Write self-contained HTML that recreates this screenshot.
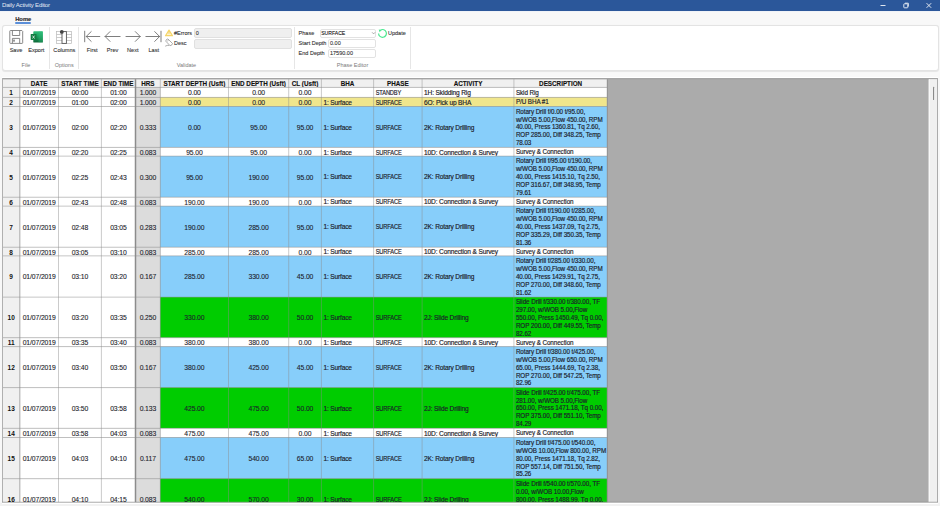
<!DOCTYPE html>
<html><head><meta charset="utf-8"><style>
html,body{margin:0;padding:0;width:940px;height:506px;overflow:hidden;background:#f8f8f8;font-family:"Liberation Sans",sans-serif;color:#1c1c2a}
.t,.c{position:absolute}
.t{white-space:nowrap}
#grid{position:absolute;left:0;top:0;width:940px;height:501.8px;overflow:hidden}
.c{box-sizing:border-box;display:flex;align-items:center;overflow:hidden}
.hc{position:relative;top:0px;font-weight:bold;-webkit-text-stroke:0.12px #111;font-size:6.3px;width:100%;text-align:center;white-space:nowrap;color:#111}
.rn{position:relative;top:0.5px;font-weight:bold;font-size:6.5px;width:100%;text-align:center;color:#111}
.cc{position:relative;top:0.5px;font-size:6.8px;letter-spacing:-0.1px;-webkit-text-stroke:0.1px #1c1c2a;width:100%;text-align:center;white-space:nowrap}
.lc{position:relative;top:0.5px;font-size:6.3px;letter-spacing:-0.08px;-webkit-text-stroke:0.16px #1c1c2a;line-height:7.9px;padding-left:2px;white-space:nowrap}
.ph{display:inline-block;transform:scaleX(0.86);transform-origin:0 50%}
.lc2{font-size:6.6px;letter-spacing:-0.16px;top:0.8px}
</style></head><body>
<div class="t" style="left:0.00px;top:0.00px;width:940.00px;height:11.00px;box-sizing:border-box;background:#2b579a"></div>
<div class="t" style="left:0.00px;top:11.00px;width:940.00px;height:0.80px;box-sizing:border-box;background:#f0f3f8"></div>
<div class="t" style="left:2.00px;top:2.47px;font-size:6.0px;line-height:6.0px;font-weight:normal;color:#e6ecf5;letter-spacing:-0.15px">Daily Activity Editor</div>
<svg class="t" style="left:0;top:0" width="940" height="12"><g stroke="#dfe6f0" stroke-width="1" fill="none"><line x1="880.5" y1="5.5" x2="885.5" y2="5.5"/><rect x="903.8" y="3.8" width="4" height="4" rx="0.6"/><path d="M905 3.2 h3.3 v3.3"/><line x1="926.6" y1="3.2" x2="931.2" y2="7.8"/><line x1="931.2" y1="3.2" x2="926.6" y2="7.8"/></g></svg>
<div class="t" style="left:15.20px;top:16.77px;font-size:5.8px;line-height:5.8px;font-weight:bold;color:#222;-webkit-text-stroke:0.1px #222;">Home</div>
<div class="t" style="left:15.00px;top:22.30px;width:16.00px;height:2.10px;box-sizing:border-box;background:#5b8fd9;border-radius:1px"></div>
<div class="t" style="left:2.30px;top:25.20px;width:936.50px;height:46.00px;box-sizing:border-box;background:#fff;border:1px solid #e3e3e3;border-radius:3px;box-shadow:0 0.6px 0.8px rgba(0,0,0,0.08)"></div>
<div class="t" style="left:48.80px;top:27.00px;width:1.00px;height:41.50px;box-sizing:border-box;background:#e6e6e6"></div>
<div class="t" style="left:77.90px;top:27.00px;width:1.00px;height:41.50px;box-sizing:border-box;background:#e6e6e6"></div>
<div class="t" style="left:294.00px;top:27.00px;width:1.00px;height:41.50px;box-sizing:border-box;background:#e6e6e6"></div>
<div class="t" style="left:409.90px;top:27.00px;width:1.00px;height:41.50px;box-sizing:border-box;background:#e6e6e6"></div>
<div class="t" style="left:-34.00px;top:63.01px;width:120px;text-align:center;font-size:5.5px;line-height:5.5px;font-weight:normal;color:#7a7a7a;">File</div>
<div class="t" style="left:4.20px;top:63.01px;width:120px;text-align:center;font-size:5.5px;line-height:5.5px;font-weight:normal;color:#7a7a7a;">Options</div>
<div class="t" style="left:126.40px;top:63.01px;width:120px;text-align:center;font-size:5.5px;line-height:5.5px;font-weight:normal;color:#7a7a7a;">Validate</div>
<div class="t" style="left:292.50px;top:62.81px;width:120px;text-align:center;font-size:5.5px;line-height:5.5px;font-weight:normal;color:#7a7a7a;">Phase Editor</div>
<div class="t" style="left:-44.00px;top:47.76px;width:120px;text-align:center;font-size:5.6px;line-height:5.6px;font-weight:normal;color:#333;-webkit-text-stroke:0.1px #333;">Save</div>
<div class="t" style="left:-23.70px;top:47.76px;width:120px;text-align:center;font-size:5.6px;line-height:5.6px;font-weight:normal;color:#333;-webkit-text-stroke:0.1px #333;">Export</div>
<div class="t" style="left:4.40px;top:47.76px;width:120px;text-align:center;font-size:5.6px;line-height:5.6px;font-weight:normal;color:#333;-webkit-text-stroke:0.1px #333;">Columns</div>
<div class="t" style="left:32.20px;top:47.76px;width:120px;text-align:center;font-size:5.6px;line-height:5.6px;font-weight:normal;color:#333;-webkit-text-stroke:0.1px #333;">First</div>
<div class="t" style="left:52.60px;top:47.76px;width:120px;text-align:center;font-size:5.6px;line-height:5.6px;font-weight:normal;color:#333;-webkit-text-stroke:0.1px #333;">Prev</div>
<div class="t" style="left:72.80px;top:47.76px;width:120px;text-align:center;font-size:5.6px;line-height:5.6px;font-weight:normal;color:#333;-webkit-text-stroke:0.1px #333;">Next</div>
<div class="t" style="left:93.80px;top:47.76px;width:120px;text-align:center;font-size:5.6px;line-height:5.6px;font-weight:normal;color:#333;-webkit-text-stroke:0.1px #333;">Last</div>
<div class="t" style="left:194.20px;top:27.70px;width:97.50px;height:9.90px;box-sizing:border-box;background:#efefef;border:1px solid #e0e0e0;border-radius:2px"></div>
<div class="t" style="left:194.20px;top:38.80px;width:97.50px;height:10.00px;box-sizing:border-box;background:#efefef;border:1px solid #e0e0e0;border-radius:2px"></div>
<div class="t" style="left:319.50px;top:28.60px;width:56.90px;height:9.20px;box-sizing:border-box;background:#fff;border:1px solid #e2e2e2;border-radius:2px"></div>
<div class="t" style="left:328.30px;top:39.00px;width:48.10px;height:8.80px;box-sizing:border-box;background:#fff;border:1px solid #e2e2e2;border-radius:2px"></div>
<div class="t" style="left:328.30px;top:49.00px;width:48.10px;height:9.10px;box-sizing:border-box;background:#fff;border:1px solid #e2e2e2;border-radius:2px"></div>
<svg class="t" style="left:0;top:0" width="420" height="72"><g fill="none" stroke="#7a7a7a" stroke-width="0.9"><path d="M9.8 31.2 q0-0.7 0.7-0.7 h11.4 l0.8 0.8 v11.4 q0 0.7-0.7 0.7 h-11.5 q-0.7 0-0.7-0.7 z"/><path d="M12.4 30.5 v5 h7.3 v-5"/><path d="M12.4 43.4 v-5 h7.3 v5"/><rect x="13.3" y="40" width="1.4" height="1.2" stroke-width="0.6"/></g><defs><linearGradient id="xg" x1="0" y1="0" x2="0" y2="1"><stop offset="0" stop-color="#2fbd78"/><stop offset="0.5" stop-color="#1a9a5a"/><stop offset="1" stop-color="#0e6636"/></linearGradient></defs><rect x="33.3" y="31.3" width="9.6" height="11.3" rx="0.7" fill="url(#xg)"/><rect x="38.5" y="31.3" width="4.4" height="11.3" rx="0.5" fill="#33c481" opacity="0.35"/><rect x="30.7" y="33.9" width="5.8" height="6.1" rx="0.4" fill="#107c41"/><path d="M32.5 35.6 l2.1 3 M34.6 35.6 l-2.1 3" stroke="#fff" stroke-width="0.7"/><g stroke="#b8b8b8" stroke-width="0.7" fill="none"><rect x="56.6" y="31.4" width="15" height="12"/><path d="M56.6 34.5 h15 M56.6 37.5 h15 M56.6 40.5 h15"/></g><rect x="62" y="31.6" width="4.4" height="11.8" fill="#fff" stroke="#555" stroke-width="0.9"/><circle cx="61.8" cy="31.9" r="1.9" fill="#444"/><g stroke="#777" stroke-width="0.95" fill="none" stroke-linecap="round"><path d="M84.7 31.2 v10.6"/><path d="M99.8 36.5 h-13.6 M91.2 31.6 l-5 4.9 l5 4.9"/><path d="M120.1 36.5 h-15 M110 31.6 l-4.9 4.9 l4.9 4.9"/><path d="M126 36.5 h14.2 M135.3 31.6 l4.9 4.9 l-4.9 4.9"/><path d="M145.9 36.5 h13.7 M154.7 31.6 l4.9 4.9 l-4.9 4.9"/><path d="M161 31.2 v10.6"/></g><path d="M169 30.1 L172.5 35.7 H165.5 Z" fill="#fdf3cf" stroke="#f5d567" stroke-width="1.2" stroke-linejoin="round"/><path d="M169 32 v1.9" stroke="#e8c050" stroke-width="0.7"/><g fill="none" stroke="#8a8a8a" stroke-width="0.7"><path d="M166.5 39.5 l1.4-0.6 l4.6 4.6 l-0.8 1.6 l-1.6 0.6 l-4.4-4.6 z"/><path d="M167.3 41.2 l1.4-1.2"/><path d="M165.2 46.2 q2-1.2 4.2-0.8"/></g><g transform="translate(0,0.5)"><path d="M380.6 29.5 A3.9 3.9 0 1 1 378.6 32.9" fill="none" stroke="#4be890" stroke-width="1.2"/><path d="M378.7 29.0 l2.9 0.4 l-2.0 2.3 z" fill="#4be890"/></g><path d="M372.1 32.3 l1.5 1.6 l1.5-1.6" fill="none" stroke="#888" stroke-width="0.7"/></svg>
<div class="t" style="left:174.00px;top:30.91px;font-size:5.5px;line-height:5.5px;font-weight:normal;color:#333;-webkit-text-stroke:0.1px #333;">#Errors</div>
<div class="t" style="left:174.00px;top:41.31px;font-size:5.5px;line-height:5.5px;font-weight:normal;color:#333;-webkit-text-stroke:0.1px #333;">Desc</div>
<div class="t" style="left:195.80px;top:30.61px;font-size:5.5px;line-height:5.5px;font-weight:normal;color:#333;-webkit-text-stroke:0.1px #333;">0</div>
<div class="t" style="left:298.60px;top:31.21px;font-size:5.5px;line-height:5.5px;font-weight:normal;color:#333;-webkit-text-stroke:0.1px #333;">Phase</div>
<div class="t" style="left:321.20px;top:31.21px;font-size:5.1px;line-height:5.1px;font-weight:normal;color:#111;-webkit-text-stroke:0.1px #111;">SURFACE</div>
<div class="t" style="left:388.00px;top:31.01px;font-size:5.5px;line-height:5.5px;font-weight:normal;color:#333;-webkit-text-stroke:0.1px #333;">Update</div>
<div class="t" style="left:298.60px;top:41.31px;font-size:5.5px;line-height:5.5px;font-weight:normal;color:#333;-webkit-text-stroke:0.1px #333;">Start Depth</div>
<div class="t" style="left:330.00px;top:41.11px;font-size:5.5px;line-height:5.5px;font-weight:normal;color:#333;-webkit-text-stroke:0.1px #333;">0.00</div>
<div class="t" style="left:298.60px;top:51.41px;font-size:5.5px;line-height:5.5px;font-weight:normal;color:#333;-webkit-text-stroke:0.1px #333;">End Depth</div>
<div class="t" style="left:330.00px;top:51.21px;font-size:5.5px;line-height:5.5px;font-weight:normal;color:#333;-webkit-text-stroke:0.1px #333;">17590.00</div>
<svg class="t" style="left:0;top:0" width="940" height="506"><rect x="2" y="78" width="926.8" height="424.3" fill="#ababab"/><rect x="2.5" y="78.7" width="604.9" height="8.700000000000003" fill="#f0f0f0"/><rect x="2.5" y="87.4" width="17.30" height="10.00" fill="#f0f0f0"/><rect x="19.8" y="87.4" width="115.70" height="10.00" fill="#ffffff"/><rect x="135.5" y="87.4" width="24.80" height="10.00" fill="#dcdcdc"/><rect x="160.3" y="87.4" width="447.10" height="10.00" fill="#ffffff"/><rect x="2.5" y="97.4" width="17.30" height="9.10" fill="#f0f0f0"/><rect x="19.8" y="97.4" width="115.70" height="9.10" fill="#ffffff"/><rect x="135.5" y="97.4" width="24.80" height="9.10" fill="#dcdcdc"/><rect x="160.3" y="97.4" width="447.10" height="9.10" fill="#f0e68c"/><rect x="2.5" y="106.5" width="17.30" height="40.90" fill="#f0f0f0"/><rect x="19.8" y="106.5" width="115.70" height="40.90" fill="#ffffff"/><rect x="135.5" y="106.5" width="24.80" height="40.90" fill="#dcdcdc"/><rect x="160.3" y="106.5" width="447.10" height="40.90" fill="#87cefa"/><rect x="2.5" y="147.4" width="17.30" height="8.70" fill="#f0f0f0"/><rect x="19.8" y="147.4" width="115.70" height="8.70" fill="#ffffff"/><rect x="135.5" y="147.4" width="24.80" height="8.70" fill="#dcdcdc"/><rect x="160.3" y="147.4" width="447.10" height="8.70" fill="#ffffff"/><rect x="2.5" y="156.1" width="17.30" height="41.10" fill="#f0f0f0"/><rect x="19.8" y="156.1" width="115.70" height="41.10" fill="#ffffff"/><rect x="135.5" y="156.1" width="24.80" height="41.10" fill="#dcdcdc"/><rect x="160.3" y="156.1" width="447.10" height="41.10" fill="#87cefa"/><rect x="2.5" y="197.2" width="17.30" height="8.90" fill="#f0f0f0"/><rect x="19.8" y="197.2" width="115.70" height="8.90" fill="#ffffff"/><rect x="135.5" y="197.2" width="24.80" height="8.90" fill="#dcdcdc"/><rect x="160.3" y="197.2" width="447.10" height="8.90" fill="#ffffff"/><rect x="2.5" y="206.1" width="17.30" height="41.10" fill="#f0f0f0"/><rect x="19.8" y="206.1" width="115.70" height="41.10" fill="#ffffff"/><rect x="135.5" y="206.1" width="24.80" height="41.10" fill="#dcdcdc"/><rect x="160.3" y="206.1" width="447.10" height="41.10" fill="#87cefa"/><rect x="2.5" y="247.2" width="17.30" height="8.70" fill="#f0f0f0"/><rect x="19.8" y="247.2" width="115.70" height="8.70" fill="#ffffff"/><rect x="135.5" y="247.2" width="24.80" height="8.70" fill="#dcdcdc"/><rect x="160.3" y="247.2" width="447.10" height="8.70" fill="#ffffff"/><rect x="2.5" y="255.9" width="17.30" height="41.20" fill="#f0f0f0"/><rect x="19.8" y="255.9" width="115.70" height="41.20" fill="#ffffff"/><rect x="135.5" y="255.9" width="24.80" height="41.20" fill="#dcdcdc"/><rect x="160.3" y="255.9" width="447.10" height="41.20" fill="#87cefa"/><rect x="2.5" y="297.1" width="17.30" height="40.60" fill="#f0f0f0"/><rect x="19.8" y="297.1" width="115.70" height="40.60" fill="#ffffff"/><rect x="135.5" y="297.1" width="24.80" height="40.60" fill="#dcdcdc"/><rect x="160.3" y="297.1" width="447.10" height="40.60" fill="#00cc00"/><rect x="2.5" y="337.7" width="17.30" height="8.90" fill="#f0f0f0"/><rect x="19.8" y="337.7" width="115.70" height="8.90" fill="#ffffff"/><rect x="135.5" y="337.7" width="24.80" height="8.90" fill="#dcdcdc"/><rect x="160.3" y="337.7" width="447.10" height="8.90" fill="#ffffff"/><rect x="2.5" y="346.6" width="17.30" height="41.00" fill="#f0f0f0"/><rect x="19.8" y="346.6" width="115.70" height="41.00" fill="#ffffff"/><rect x="135.5" y="346.6" width="24.80" height="41.00" fill="#dcdcdc"/><rect x="160.3" y="346.6" width="447.10" height="41.00" fill="#87cefa"/><rect x="2.5" y="387.6" width="17.30" height="40.70" fill="#f0f0f0"/><rect x="19.8" y="387.6" width="115.70" height="40.70" fill="#ffffff"/><rect x="135.5" y="387.6" width="24.80" height="40.70" fill="#dcdcdc"/><rect x="160.3" y="387.6" width="447.10" height="40.70" fill="#00cc00"/><rect x="2.5" y="428.3" width="17.30" height="9.20" fill="#f0f0f0"/><rect x="19.8" y="428.3" width="115.70" height="9.20" fill="#ffffff"/><rect x="135.5" y="428.3" width="24.80" height="9.20" fill="#dcdcdc"/><rect x="160.3" y="428.3" width="447.10" height="9.20" fill="#ffffff"/><rect x="2.5" y="437.5" width="17.30" height="41.20" fill="#f0f0f0"/><rect x="19.8" y="437.5" width="115.70" height="41.20" fill="#ffffff"/><rect x="135.5" y="437.5" width="24.80" height="41.20" fill="#dcdcdc"/><rect x="160.3" y="437.5" width="447.10" height="41.20" fill="#87cefa"/><rect x="2.5" y="478.7" width="17.30" height="41.30" fill="#f0f0f0"/><rect x="19.8" y="478.7" width="115.70" height="41.30" fill="#ffffff"/><rect x="135.5" y="478.7" width="24.80" height="41.30" fill="#dcdcdc"/><rect x="160.3" y="478.7" width="447.10" height="41.30" fill="#00cc00"/><rect x="2.5" y="86.90" width="604.90" height="1" fill="rgba(140,140,140,0.45)"/><rect x="2.5" y="96.90" width="604.90" height="1" fill="rgba(140,140,140,0.45)"/><rect x="2.5" y="106.00" width="604.90" height="1" fill="rgba(140,140,140,0.45)"/><rect x="2.5" y="146.90" width="604.90" height="1" fill="rgba(140,140,140,0.45)"/><rect x="2.5" y="155.60" width="604.90" height="1" fill="rgba(140,140,140,0.45)"/><rect x="2.5" y="196.70" width="604.90" height="1" fill="rgba(140,140,140,0.45)"/><rect x="2.5" y="205.60" width="604.90" height="1" fill="rgba(140,140,140,0.45)"/><rect x="2.5" y="246.70" width="604.90" height="1" fill="rgba(140,140,140,0.45)"/><rect x="2.5" y="255.40" width="604.90" height="1" fill="rgba(140,140,140,0.45)"/><rect x="2.5" y="296.60" width="604.90" height="1" fill="rgba(140,140,140,0.45)"/><rect x="2.5" y="337.20" width="604.90" height="1" fill="rgba(140,140,140,0.45)"/><rect x="2.5" y="346.10" width="604.90" height="1" fill="rgba(140,140,140,0.45)"/><rect x="2.5" y="387.10" width="604.90" height="1" fill="rgba(140,140,140,0.45)"/><rect x="2.5" y="427.80" width="604.90" height="1" fill="rgba(140,140,140,0.45)"/><rect x="2.5" y="437.00" width="604.90" height="1" fill="rgba(140,140,140,0.45)"/><rect x="2.5" y="478.20" width="604.90" height="1" fill="rgba(140,140,140,0.45)"/><rect x="2.5" y="519.50" width="604.90" height="1" fill="rgba(140,140,140,0.45)"/><rect x="19.05" y="78" width="1.5" height="424.30" fill="rgba(140,140,140,0.45)"/><rect x="58.00" y="78" width="1" height="424.30" fill="rgba(140,140,140,0.45)"/><rect x="100.90" y="78" width="1" height="424.30" fill="rgba(140,140,140,0.45)"/><rect x="134.75" y="78" width="1.5" height="424.30" fill="#8c8c8c"/><rect x="159.80" y="78" width="1" height="424.30" fill="rgba(140,140,140,0.45)"/><rect x="228.00" y="78" width="1" height="424.30" fill="rgba(140,140,140,0.45)"/><rect x="288.20" y="78" width="1" height="424.30" fill="rgba(140,140,140,0.45)"/><rect x="320.90" y="78" width="1" height="424.30" fill="rgba(140,140,140,0.45)"/><rect x="373.10" y="78" width="1" height="424.30" fill="rgba(140,140,140,0.45)"/><rect x="421.60" y="78" width="1" height="424.30" fill="rgba(140,140,140,0.45)"/><rect x="513.40" y="78" width="1" height="424.30" fill="rgba(140,140,140,0.45)"/><rect x="606.80" y="78" width="1.2" height="424.30" fill="#959595"/><rect x="2" y="77" width="936" height="1" fill="#ffffff"/><rect x="2" y="78.0" width="936" height="1.4" fill="#a4a4a4"/><rect x="2" y="78" width="1" height="424.30" fill="#b0b0b0"/><rect x="928.8" y="79.4" width="8.2" height="422.90" fill="#f0f0f0"/><rect x="928.8" y="79.4" width="1" height="422.90" fill="#fafafa"/><rect x="937" y="78" width="1" height="424.30" fill="#ababab"/><rect x="933" y="86.7" width="1.1" height="13.3" rx="0.5" fill="#8a8a8a"/><rect x="2" y="501.80" width="936" height="1" fill="#8c8c8c"/><rect x="0" y="502.80" width="940" height="3.70" fill="#f2f2f2"/><rect x="2" y="502.80" width="936" height="1.2" fill="#ffffff"/></svg>
<div id="grid">
<div class="c" style="left:19.80px;top:79.20px;width:38.70px;height:8.20px"><span class="hc">DATE</span></div>
<div class="c" style="left:58.50px;top:79.20px;width:42.90px;height:8.20px"><span class="hc">START TIME</span></div>
<div class="c" style="left:101.40px;top:79.20px;width:34.10px;height:8.20px"><span class="hc">END TIME</span></div>
<div class="c" style="left:135.50px;top:79.20px;width:24.80px;height:8.20px"><span class="hc">HRS</span></div>
<div class="c" style="left:160.30px;top:79.20px;width:68.20px;height:8.20px"><span class="hc">START DEPTH (Usft)</span></div>
<div class="c" style="left:228.50px;top:79.20px;width:60.20px;height:8.20px"><span class="hc">END DEPTH (Usft)</span></div>
<div class="c" style="left:288.70px;top:79.20px;width:32.70px;height:8.20px"><span class="hc">CL (Usft)</span></div>
<div class="c" style="left:321.40px;top:79.20px;width:52.20px;height:8.20px"><span class="hc">BHA</span></div>
<div class="c" style="left:373.60px;top:79.20px;width:48.50px;height:8.20px"><span class="hc">PHASE</span></div>
<div class="c" style="left:422.10px;top:79.20px;width:91.80px;height:8.20px"><span class="hc">ACTIVITY</span></div>
<div class="c" style="left:513.90px;top:79.20px;width:93.50px;height:8.20px"><span class="hc">DESCRIPTION</span></div>
<div class="c" style="left:2.50px;top:87.40px;width:17.30px;height:10.00px"><span class="rn">1</span></div>
<div class="c" style="left:19.80px;top:87.40px;width:38.70px;height:10.00px"><span class="cc">01/07/2019</span></div>
<div class="c" style="left:58.50px;top:87.40px;width:42.90px;height:10.00px"><span class="cc">00:00</span></div>
<div class="c" style="left:101.40px;top:87.40px;width:34.10px;height:10.00px"><span class="cc">01:00</span></div>
<div class="c" style="left:135.50px;top:87.40px;width:24.80px;height:10.00px"><span class="cc">1.000</span></div>
<div class="c" style="left:160.30px;top:87.40px;width:68.20px;height:10.00px"><span class="cc">0.00</span></div>
<div class="c" style="left:228.50px;top:87.40px;width:60.20px;height:10.00px"><span class="cc">0.00</span></div>
<div class="c" style="left:288.70px;top:87.40px;width:32.70px;height:10.00px"><span class="cc">0.00</span></div>
<div class="c" style="left:321.40px;top:87.40px;width:52.20px;height:10.00px"><span class="lc lc2"></span></div>
<div class="c" style="left:373.60px;top:87.40px;width:48.50px;height:10.00px"><span class="lc lc2 ph">STANDBY</span></div>
<div class="c" style="left:422.10px;top:87.40px;width:91.80px;height:10.00px"><span class="lc lc2">1H: Skidding Rig</span></div>
<div class="c" style="left:513.90px;top:87.40px;width:93.50px;height:10.00px"><span class="lc">Skid Rig</span></div>
<div class="c" style="left:2.50px;top:97.40px;width:17.30px;height:9.10px"><span class="rn">2</span></div>
<div class="c" style="left:19.80px;top:97.40px;width:38.70px;height:9.10px"><span class="cc">01/07/2019</span></div>
<div class="c" style="left:58.50px;top:97.40px;width:42.90px;height:9.10px"><span class="cc">01:00</span></div>
<div class="c" style="left:101.40px;top:97.40px;width:34.10px;height:9.10px"><span class="cc">02:00</span></div>
<div class="c" style="left:135.50px;top:97.40px;width:24.80px;height:9.10px"><span class="cc">1.000</span></div>
<div class="c" style="left:160.30px;top:97.40px;width:68.20px;height:9.10px"><span class="cc">0.00</span></div>
<div class="c" style="left:228.50px;top:97.40px;width:60.20px;height:9.10px"><span class="cc">0.00</span></div>
<div class="c" style="left:288.70px;top:97.40px;width:32.70px;height:9.10px"><span class="cc">0.00</span></div>
<div class="c" style="left:321.40px;top:97.40px;width:52.20px;height:9.10px"><span class="lc lc2">1: Surface</span></div>
<div class="c" style="left:373.60px;top:97.40px;width:48.50px;height:9.10px"><span class="lc lc2 ph">SURFACE</span></div>
<div class="c" style="left:422.10px;top:97.40px;width:91.80px;height:9.10px"><span class="lc lc2">6O: Pick up BHA</span></div>
<div class="c" style="left:513.90px;top:97.40px;width:93.50px;height:9.10px"><span class="lc">P/U BHA #1</span></div>
<div class="c" style="left:2.50px;top:106.50px;width:17.30px;height:40.90px"><span class="rn">3</span></div>
<div class="c" style="left:19.80px;top:106.50px;width:38.70px;height:40.90px"><span class="cc">01/07/2019</span></div>
<div class="c" style="left:58.50px;top:106.50px;width:42.90px;height:40.90px"><span class="cc">02:00</span></div>
<div class="c" style="left:101.40px;top:106.50px;width:34.10px;height:40.90px"><span class="cc">02:20</span></div>
<div class="c" style="left:135.50px;top:106.50px;width:24.80px;height:40.90px"><span class="cc">0.333</span></div>
<div class="c" style="left:160.30px;top:106.50px;width:68.20px;height:40.90px"><span class="cc">0.00</span></div>
<div class="c" style="left:228.50px;top:106.50px;width:60.20px;height:40.90px"><span class="cc">95.00</span></div>
<div class="c" style="left:288.70px;top:106.50px;width:32.70px;height:40.90px"><span class="cc">95.00</span></div>
<div class="c" style="left:321.40px;top:106.50px;width:52.20px;height:40.90px"><span class="lc lc2">1: Surface</span></div>
<div class="c" style="left:373.60px;top:106.50px;width:48.50px;height:40.90px"><span class="lc lc2 ph">SURFACE</span></div>
<div class="c" style="left:422.10px;top:106.50px;width:91.80px;height:40.90px"><span class="lc lc2">2K: Rotary Drilling</span></div>
<div class="c" style="left:513.90px;top:106.50px;width:93.50px;height:40.90px"><span class="lc">Rotary Drill f/0.00 t/95.00,<br>w/WOB 5.00,Flow 450.00, RPM<br>40.00, Press 1360.81, Tq 2.60,<br>ROP 285.00, Diff 348.25, Temp<br>78.03</span></div>
<div class="c" style="left:2.50px;top:147.40px;width:17.30px;height:8.70px"><span class="rn">4</span></div>
<div class="c" style="left:19.80px;top:147.40px;width:38.70px;height:8.70px"><span class="cc">01/07/2019</span></div>
<div class="c" style="left:58.50px;top:147.40px;width:42.90px;height:8.70px"><span class="cc">02:20</span></div>
<div class="c" style="left:101.40px;top:147.40px;width:34.10px;height:8.70px"><span class="cc">02:25</span></div>
<div class="c" style="left:135.50px;top:147.40px;width:24.80px;height:8.70px"><span class="cc">0.083</span></div>
<div class="c" style="left:160.30px;top:147.40px;width:68.20px;height:8.70px"><span class="cc">95.00</span></div>
<div class="c" style="left:228.50px;top:147.40px;width:60.20px;height:8.70px"><span class="cc">95.00</span></div>
<div class="c" style="left:288.70px;top:147.40px;width:32.70px;height:8.70px"><span class="cc">0.00</span></div>
<div class="c" style="left:321.40px;top:147.40px;width:52.20px;height:8.70px"><span class="lc lc2">1: Surface</span></div>
<div class="c" style="left:373.60px;top:147.40px;width:48.50px;height:8.70px"><span class="lc lc2 ph">SURFACE</span></div>
<div class="c" style="left:422.10px;top:147.40px;width:91.80px;height:8.70px"><span class="lc lc2">10D: Connection &amp; Survey</span></div>
<div class="c" style="left:513.90px;top:147.40px;width:93.50px;height:8.70px"><span class="lc">Survey &amp; Connection</span></div>
<div class="c" style="left:2.50px;top:156.10px;width:17.30px;height:41.10px"><span class="rn">5</span></div>
<div class="c" style="left:19.80px;top:156.10px;width:38.70px;height:41.10px"><span class="cc">01/07/2019</span></div>
<div class="c" style="left:58.50px;top:156.10px;width:42.90px;height:41.10px"><span class="cc">02:25</span></div>
<div class="c" style="left:101.40px;top:156.10px;width:34.10px;height:41.10px"><span class="cc">02:43</span></div>
<div class="c" style="left:135.50px;top:156.10px;width:24.80px;height:41.10px"><span class="cc">0.300</span></div>
<div class="c" style="left:160.30px;top:156.10px;width:68.20px;height:41.10px"><span class="cc">95.00</span></div>
<div class="c" style="left:228.50px;top:156.10px;width:60.20px;height:41.10px"><span class="cc">190.00</span></div>
<div class="c" style="left:288.70px;top:156.10px;width:32.70px;height:41.10px"><span class="cc">95.00</span></div>
<div class="c" style="left:321.40px;top:156.10px;width:52.20px;height:41.10px"><span class="lc lc2">1: Surface</span></div>
<div class="c" style="left:373.60px;top:156.10px;width:48.50px;height:41.10px"><span class="lc lc2 ph">SURFACE</span></div>
<div class="c" style="left:422.10px;top:156.10px;width:91.80px;height:41.10px"><span class="lc lc2">2K: Rotary Drilling</span></div>
<div class="c" style="left:513.90px;top:156.10px;width:93.50px;height:41.10px"><span class="lc">Rotary Drill f/95.00 t/190.00,<br>w/WOB 5.00,Flow 450.00, RPM<br>40.00, Press 1415.10, Tq 2.50,<br>ROP 316.67, Diff 348.95, Temp<br>79.61</span></div>
<div class="c" style="left:2.50px;top:197.20px;width:17.30px;height:8.90px"><span class="rn">6</span></div>
<div class="c" style="left:19.80px;top:197.20px;width:38.70px;height:8.90px"><span class="cc">01/07/2019</span></div>
<div class="c" style="left:58.50px;top:197.20px;width:42.90px;height:8.90px"><span class="cc">02:43</span></div>
<div class="c" style="left:101.40px;top:197.20px;width:34.10px;height:8.90px"><span class="cc">02:48</span></div>
<div class="c" style="left:135.50px;top:197.20px;width:24.80px;height:8.90px"><span class="cc">0.083</span></div>
<div class="c" style="left:160.30px;top:197.20px;width:68.20px;height:8.90px"><span class="cc">190.00</span></div>
<div class="c" style="left:228.50px;top:197.20px;width:60.20px;height:8.90px"><span class="cc">190.00</span></div>
<div class="c" style="left:288.70px;top:197.20px;width:32.70px;height:8.90px"><span class="cc">0.00</span></div>
<div class="c" style="left:321.40px;top:197.20px;width:52.20px;height:8.90px"><span class="lc lc2">1: Surface</span></div>
<div class="c" style="left:373.60px;top:197.20px;width:48.50px;height:8.90px"><span class="lc lc2 ph">SURFACE</span></div>
<div class="c" style="left:422.10px;top:197.20px;width:91.80px;height:8.90px"><span class="lc lc2">10D: Connection &amp; Survey</span></div>
<div class="c" style="left:513.90px;top:197.20px;width:93.50px;height:8.90px"><span class="lc">Survey &amp; Connection</span></div>
<div class="c" style="left:2.50px;top:206.10px;width:17.30px;height:41.10px"><span class="rn">7</span></div>
<div class="c" style="left:19.80px;top:206.10px;width:38.70px;height:41.10px"><span class="cc">01/07/2019</span></div>
<div class="c" style="left:58.50px;top:206.10px;width:42.90px;height:41.10px"><span class="cc">02:48</span></div>
<div class="c" style="left:101.40px;top:206.10px;width:34.10px;height:41.10px"><span class="cc">03:05</span></div>
<div class="c" style="left:135.50px;top:206.10px;width:24.80px;height:41.10px"><span class="cc">0.283</span></div>
<div class="c" style="left:160.30px;top:206.10px;width:68.20px;height:41.10px"><span class="cc">190.00</span></div>
<div class="c" style="left:228.50px;top:206.10px;width:60.20px;height:41.10px"><span class="cc">285.00</span></div>
<div class="c" style="left:288.70px;top:206.10px;width:32.70px;height:41.10px"><span class="cc">95.00</span></div>
<div class="c" style="left:321.40px;top:206.10px;width:52.20px;height:41.10px"><span class="lc lc2">1: Surface</span></div>
<div class="c" style="left:373.60px;top:206.10px;width:48.50px;height:41.10px"><span class="lc lc2 ph">SURFACE</span></div>
<div class="c" style="left:422.10px;top:206.10px;width:91.80px;height:41.10px"><span class="lc lc2">2K: Rotary Drilling</span></div>
<div class="c" style="left:513.90px;top:206.10px;width:93.50px;height:41.10px"><span class="lc">Rotary Drill f/190.00 t/285.00,<br>w/WOB 5.00,Flow 450.00, RPM<br>40.00, Press 1437.09, Tq 2.75,<br>ROP 335.29, Diff 350.35, Temp<br>81.36</span></div>
<div class="c" style="left:2.50px;top:247.20px;width:17.30px;height:8.70px"><span class="rn">8</span></div>
<div class="c" style="left:19.80px;top:247.20px;width:38.70px;height:8.70px"><span class="cc">01/07/2019</span></div>
<div class="c" style="left:58.50px;top:247.20px;width:42.90px;height:8.70px"><span class="cc">03:05</span></div>
<div class="c" style="left:101.40px;top:247.20px;width:34.10px;height:8.70px"><span class="cc">03:10</span></div>
<div class="c" style="left:135.50px;top:247.20px;width:24.80px;height:8.70px"><span class="cc">0.083</span></div>
<div class="c" style="left:160.30px;top:247.20px;width:68.20px;height:8.70px"><span class="cc">285.00</span></div>
<div class="c" style="left:228.50px;top:247.20px;width:60.20px;height:8.70px"><span class="cc">285.00</span></div>
<div class="c" style="left:288.70px;top:247.20px;width:32.70px;height:8.70px"><span class="cc">0.00</span></div>
<div class="c" style="left:321.40px;top:247.20px;width:52.20px;height:8.70px"><span class="lc lc2">1: Surface</span></div>
<div class="c" style="left:373.60px;top:247.20px;width:48.50px;height:8.70px"><span class="lc lc2 ph">SURFACE</span></div>
<div class="c" style="left:422.10px;top:247.20px;width:91.80px;height:8.70px"><span class="lc lc2">10D: Connection &amp; Survey</span></div>
<div class="c" style="left:513.90px;top:247.20px;width:93.50px;height:8.70px"><span class="lc">Survey &amp; Connection</span></div>
<div class="c" style="left:2.50px;top:255.90px;width:17.30px;height:41.20px"><span class="rn">9</span></div>
<div class="c" style="left:19.80px;top:255.90px;width:38.70px;height:41.20px"><span class="cc">01/07/2019</span></div>
<div class="c" style="left:58.50px;top:255.90px;width:42.90px;height:41.20px"><span class="cc">03:10</span></div>
<div class="c" style="left:101.40px;top:255.90px;width:34.10px;height:41.20px"><span class="cc">03:20</span></div>
<div class="c" style="left:135.50px;top:255.90px;width:24.80px;height:41.20px"><span class="cc">0.167</span></div>
<div class="c" style="left:160.30px;top:255.90px;width:68.20px;height:41.20px"><span class="cc">285.00</span></div>
<div class="c" style="left:228.50px;top:255.90px;width:60.20px;height:41.20px"><span class="cc">330.00</span></div>
<div class="c" style="left:288.70px;top:255.90px;width:32.70px;height:41.20px"><span class="cc">45.00</span></div>
<div class="c" style="left:321.40px;top:255.90px;width:52.20px;height:41.20px"><span class="lc lc2">1: Surface</span></div>
<div class="c" style="left:373.60px;top:255.90px;width:48.50px;height:41.20px"><span class="lc lc2 ph">SURFACE</span></div>
<div class="c" style="left:422.10px;top:255.90px;width:91.80px;height:41.20px"><span class="lc lc2">2K: Rotary Drilling</span></div>
<div class="c" style="left:513.90px;top:255.90px;width:93.50px;height:41.20px"><span class="lc">Rotary Drill f/285.00 t/330.00,<br>w/WOB 5.00,Flow 450.00, RPM<br>40.00, Press 1429.91, Tq 2.75,<br>ROP 270.00, Diff 348.60, Temp<br>81.62</span></div>
<div class="c" style="left:2.50px;top:297.10px;width:17.30px;height:40.60px"><span class="rn">10</span></div>
<div class="c" style="left:19.80px;top:297.10px;width:38.70px;height:40.60px"><span class="cc">01/07/2019</span></div>
<div class="c" style="left:58.50px;top:297.10px;width:42.90px;height:40.60px"><span class="cc">03:20</span></div>
<div class="c" style="left:101.40px;top:297.10px;width:34.10px;height:40.60px"><span class="cc">03:35</span></div>
<div class="c" style="left:135.50px;top:297.10px;width:24.80px;height:40.60px"><span class="cc">0.250</span></div>
<div class="c" style="left:160.30px;top:297.10px;width:68.20px;height:40.60px"><span class="cc">330.00</span></div>
<div class="c" style="left:228.50px;top:297.10px;width:60.20px;height:40.60px"><span class="cc">380.00</span></div>
<div class="c" style="left:288.70px;top:297.10px;width:32.70px;height:40.60px"><span class="cc">50.00</span></div>
<div class="c" style="left:321.40px;top:297.10px;width:52.20px;height:40.60px"><span class="lc lc2">1: Surface</span></div>
<div class="c" style="left:373.60px;top:297.10px;width:48.50px;height:40.60px"><span class="lc lc2 ph">SURFACE</span></div>
<div class="c" style="left:422.10px;top:297.10px;width:91.80px;height:40.60px"><span class="lc lc2">2J: Slide Drilling</span></div>
<div class="c" style="left:513.90px;top:297.10px;width:93.50px;height:40.60px"><span class="lc">Slide Drill f/330.00 t/380.00, TF<br>297.00, w/WOB 5.00,Flow<br>550.00, Press 1450.49, Tq 0.00,<br>ROP 200.00, Diff 449.55, Temp<br>82.62</span></div>
<div class="c" style="left:2.50px;top:337.70px;width:17.30px;height:8.90px"><span class="rn">11</span></div>
<div class="c" style="left:19.80px;top:337.70px;width:38.70px;height:8.90px"><span class="cc">01/07/2019</span></div>
<div class="c" style="left:58.50px;top:337.70px;width:42.90px;height:8.90px"><span class="cc">03:35</span></div>
<div class="c" style="left:101.40px;top:337.70px;width:34.10px;height:8.90px"><span class="cc">03:40</span></div>
<div class="c" style="left:135.50px;top:337.70px;width:24.80px;height:8.90px"><span class="cc">0.083</span></div>
<div class="c" style="left:160.30px;top:337.70px;width:68.20px;height:8.90px"><span class="cc">380.00</span></div>
<div class="c" style="left:228.50px;top:337.70px;width:60.20px;height:8.90px"><span class="cc">380.00</span></div>
<div class="c" style="left:288.70px;top:337.70px;width:32.70px;height:8.90px"><span class="cc">0.00</span></div>
<div class="c" style="left:321.40px;top:337.70px;width:52.20px;height:8.90px"><span class="lc lc2">1: Surface</span></div>
<div class="c" style="left:373.60px;top:337.70px;width:48.50px;height:8.90px"><span class="lc lc2 ph">SURFACE</span></div>
<div class="c" style="left:422.10px;top:337.70px;width:91.80px;height:8.90px"><span class="lc lc2">10D: Connection &amp; Survey</span></div>
<div class="c" style="left:513.90px;top:337.70px;width:93.50px;height:8.90px"><span class="lc">Survey &amp; Connection</span></div>
<div class="c" style="left:2.50px;top:346.60px;width:17.30px;height:41.00px"><span class="rn">12</span></div>
<div class="c" style="left:19.80px;top:346.60px;width:38.70px;height:41.00px"><span class="cc">01/07/2019</span></div>
<div class="c" style="left:58.50px;top:346.60px;width:42.90px;height:41.00px"><span class="cc">03:40</span></div>
<div class="c" style="left:101.40px;top:346.60px;width:34.10px;height:41.00px"><span class="cc">03:50</span></div>
<div class="c" style="left:135.50px;top:346.60px;width:24.80px;height:41.00px"><span class="cc">0.167</span></div>
<div class="c" style="left:160.30px;top:346.60px;width:68.20px;height:41.00px"><span class="cc">380.00</span></div>
<div class="c" style="left:228.50px;top:346.60px;width:60.20px;height:41.00px"><span class="cc">425.00</span></div>
<div class="c" style="left:288.70px;top:346.60px;width:32.70px;height:41.00px"><span class="cc">45.00</span></div>
<div class="c" style="left:321.40px;top:346.60px;width:52.20px;height:41.00px"><span class="lc lc2">1: Surface</span></div>
<div class="c" style="left:373.60px;top:346.60px;width:48.50px;height:41.00px"><span class="lc lc2 ph">SURFACE</span></div>
<div class="c" style="left:422.10px;top:346.60px;width:91.80px;height:41.00px"><span class="lc lc2">2K: Rotary Drilling</span></div>
<div class="c" style="left:513.90px;top:346.60px;width:93.50px;height:41.00px"><span class="lc">Rotary Drill f/380.00 t/425.00,<br>w/WOB 5.00,Flow 650.00, RPM<br>65.00, Press 1444.69, Tq 2.38,<br>ROP 270.00, Diff 547.25, Temp<br>82.96</span></div>
<div class="c" style="left:2.50px;top:387.60px;width:17.30px;height:40.70px"><span class="rn">13</span></div>
<div class="c" style="left:19.80px;top:387.60px;width:38.70px;height:40.70px"><span class="cc">01/07/2019</span></div>
<div class="c" style="left:58.50px;top:387.60px;width:42.90px;height:40.70px"><span class="cc">03:50</span></div>
<div class="c" style="left:101.40px;top:387.60px;width:34.10px;height:40.70px"><span class="cc">03:58</span></div>
<div class="c" style="left:135.50px;top:387.60px;width:24.80px;height:40.70px"><span class="cc">0.133</span></div>
<div class="c" style="left:160.30px;top:387.60px;width:68.20px;height:40.70px"><span class="cc">425.00</span></div>
<div class="c" style="left:228.50px;top:387.60px;width:60.20px;height:40.70px"><span class="cc">475.00</span></div>
<div class="c" style="left:288.70px;top:387.60px;width:32.70px;height:40.70px"><span class="cc">50.00</span></div>
<div class="c" style="left:321.40px;top:387.60px;width:52.20px;height:40.70px"><span class="lc lc2">1: Surface</span></div>
<div class="c" style="left:373.60px;top:387.60px;width:48.50px;height:40.70px"><span class="lc lc2 ph">SURFACE</span></div>
<div class="c" style="left:422.10px;top:387.60px;width:91.80px;height:40.70px"><span class="lc lc2">2J: Slide Drilling</span></div>
<div class="c" style="left:513.90px;top:387.60px;width:93.50px;height:40.70px"><span class="lc">Slide Drill f/425.00 t/475.00, TF<br>281.00, w/WOB 5.00,Flow<br>650.00, Press 1471.18, Tq 0.00,<br>ROP 375.00, Diff 551.10, Temp<br>84.29</span></div>
<div class="c" style="left:2.50px;top:428.30px;width:17.30px;height:9.20px"><span class="rn">14</span></div>
<div class="c" style="left:19.80px;top:428.30px;width:38.70px;height:9.20px"><span class="cc">01/07/2019</span></div>
<div class="c" style="left:58.50px;top:428.30px;width:42.90px;height:9.20px"><span class="cc">03:58</span></div>
<div class="c" style="left:101.40px;top:428.30px;width:34.10px;height:9.20px"><span class="cc">04:03</span></div>
<div class="c" style="left:135.50px;top:428.30px;width:24.80px;height:9.20px"><span class="cc">0.083</span></div>
<div class="c" style="left:160.30px;top:428.30px;width:68.20px;height:9.20px"><span class="cc">475.00</span></div>
<div class="c" style="left:228.50px;top:428.30px;width:60.20px;height:9.20px"><span class="cc">475.00</span></div>
<div class="c" style="left:288.70px;top:428.30px;width:32.70px;height:9.20px"><span class="cc">0.00</span></div>
<div class="c" style="left:321.40px;top:428.30px;width:52.20px;height:9.20px"><span class="lc lc2">1: Surface</span></div>
<div class="c" style="left:373.60px;top:428.30px;width:48.50px;height:9.20px"><span class="lc lc2 ph">SURFACE</span></div>
<div class="c" style="left:422.10px;top:428.30px;width:91.80px;height:9.20px"><span class="lc lc2">10D: Connection &amp; Survey</span></div>
<div class="c" style="left:513.90px;top:428.30px;width:93.50px;height:9.20px"><span class="lc">Survey &amp; Connection</span></div>
<div class="c" style="left:2.50px;top:437.50px;width:17.30px;height:41.20px"><span class="rn">15</span></div>
<div class="c" style="left:19.80px;top:437.50px;width:38.70px;height:41.20px"><span class="cc">01/07/2019</span></div>
<div class="c" style="left:58.50px;top:437.50px;width:42.90px;height:41.20px"><span class="cc">04:03</span></div>
<div class="c" style="left:101.40px;top:437.50px;width:34.10px;height:41.20px"><span class="cc">04:10</span></div>
<div class="c" style="left:135.50px;top:437.50px;width:24.80px;height:41.20px"><span class="cc">0.117</span></div>
<div class="c" style="left:160.30px;top:437.50px;width:68.20px;height:41.20px"><span class="cc">475.00</span></div>
<div class="c" style="left:228.50px;top:437.50px;width:60.20px;height:41.20px"><span class="cc">540.00</span></div>
<div class="c" style="left:288.70px;top:437.50px;width:32.70px;height:41.20px"><span class="cc">65.00</span></div>
<div class="c" style="left:321.40px;top:437.50px;width:52.20px;height:41.20px"><span class="lc lc2">1: Surface</span></div>
<div class="c" style="left:373.60px;top:437.50px;width:48.50px;height:41.20px"><span class="lc lc2 ph">SURFACE</span></div>
<div class="c" style="left:422.10px;top:437.50px;width:91.80px;height:41.20px"><span class="lc lc2">2K: Rotary Drilling</span></div>
<div class="c" style="left:513.90px;top:437.50px;width:93.50px;height:41.20px"><span class="lc">Rotary Drill f/475.00 t/540.00,<br>w/WOB 10.00,Flow 800.00, RPM<br>80.00, Press 1471.18, Tq 2.82,<br>ROP 557.14, Diff 751.50, Temp<br>85.26</span></div>
<div class="c" style="left:2.50px;top:478.70px;width:17.30px;height:41.30px"><span class="rn">16</span></div>
<div class="c" style="left:19.80px;top:478.70px;width:38.70px;height:41.30px"><span class="cc">01/07/2019</span></div>
<div class="c" style="left:58.50px;top:478.70px;width:42.90px;height:41.30px"><span class="cc">04:10</span></div>
<div class="c" style="left:101.40px;top:478.70px;width:34.10px;height:41.30px"><span class="cc">04:15</span></div>
<div class="c" style="left:135.50px;top:478.70px;width:24.80px;height:41.30px"><span class="cc">0.083</span></div>
<div class="c" style="left:160.30px;top:478.70px;width:68.20px;height:41.30px"><span class="cc">540.00</span></div>
<div class="c" style="left:228.50px;top:478.70px;width:60.20px;height:41.30px"><span class="cc">570.00</span></div>
<div class="c" style="left:288.70px;top:478.70px;width:32.70px;height:41.30px"><span class="cc">30.00</span></div>
<div class="c" style="left:321.40px;top:478.70px;width:52.20px;height:41.30px"><span class="lc lc2">1: Surface</span></div>
<div class="c" style="left:373.60px;top:478.70px;width:48.50px;height:41.30px"><span class="lc lc2 ph">SURFACE</span></div>
<div class="c" style="left:422.10px;top:478.70px;width:91.80px;height:41.30px"><span class="lc lc2">2J: Slide Drilling</span></div>
<div class="c" style="left:513.90px;top:478.70px;width:93.50px;height:41.30px"><span class="lc">Slide Drill f/540.00 t/570.00, TF<br>0.00, w/WOB 10.00,Flow<br>800.00, Press 1488.99, Tq 0.00,<br>ROP 250.00, Diff 600.00, Temp<br>86.00</span></div>
</div>
</body></html>
